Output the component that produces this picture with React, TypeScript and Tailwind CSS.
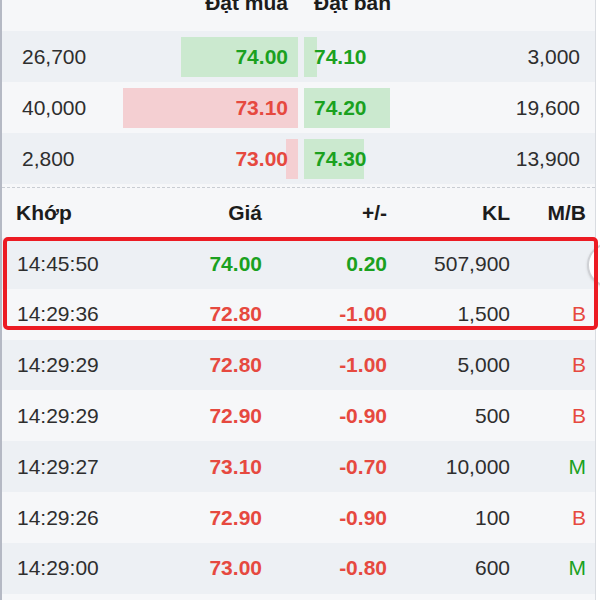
import React from 'react';

type BookRow = {
  bidVol: string;
  bid: string;
  bidUp: boolean;
  bidBar: number;
  ask: string;
  askBar: number;
  askVol: string;
};

type Match = {
  time: string;
  price: string;
  change: string;
  up: boolean;
  vol: string;
  side: '' | 'M' | 'B';
};

const book: BookRow[] = [
  { bidVol: '26,700', bid: '74.00', bidUp: true, bidBar: 117, ask: '74.10', askBar: 13, askVol: '3,000' },
  { bidVol: '40,000', bid: '73.10', bidUp: false, bidBar: 175, ask: '74.20', askBar: 86, askVol: '19,600' },
  { bidVol: '2,800', bid: '73.00', bidUp: false, bidBar: 12, ask: '74.30', askBar: 60, askVol: '13,900' },
];

const matches: Match[] = [
  { time: '14:45:50', price: '74.00', change: '0.20', up: true, vol: '507,900', side: '' },
  { time: '14:29:36', price: '72.80', change: '-1.00', up: false, vol: '1,500', side: 'B' },
  { time: '14:29:29', price: '72.80', change: '-1.00', up: false, vol: '5,000', side: 'B' },
  { time: '14:29:29', price: '72.90', change: '-0.90', up: false, vol: '500', side: 'B' },
  { time: '14:29:27', price: '73.10', change: '-0.70', up: false, vol: '10,000', side: 'M' },
  { time: '14:29:26', price: '72.90', change: '-0.90', up: false, vol: '100', side: 'B' },
  { time: '14:29:00', price: '73.00', change: '-0.80', up: false, vol: '600', side: 'M' },
];

const App: React.FC = () => {
  return (
    <div className="relative w-[600px] h-[600px] overflow-hidden bg-white font-['Liberation_Sans',Arial,sans-serif] text-[21px] text-[#2e2e2e]">
      <div className="flex h-full">
        {/* left edge */}
        <div className="w-[2px] shrink-0 bg-[#b5b9c4]" />

        <div className="w-[594px] shrink-0 bg-[#f6f7f9] border-r border-[#d9dce1] mt-[-20px]">
          {/* Order book header */}
          <div className="flex items-center h-[51px] font-bold text-[#1c1c1c]">
            <div className="w-[120px]" />
            <div className="relative -top-[3px] w-[176px] pr-[10px] text-right">Đặt mua</div>
            <div className="w-[6px]" />
            <div className="relative -top-[3px] w-[176px] pl-[10px]">Đặt bán</div>
          </div>

          {/* Order book rows */}
          {book.map((r, i) => (
            <div
              key={i}
              className={`flex items-center h-[51px] ${i % 2 === 0 ? 'bg-[#edf0f4]' : 'bg-[#f6f7f9]'}`}
            >
              <div className="w-[120px] pl-[20px]">{r.bidVol}</div>
              <div className="relative w-[176px] h-[40px] flex items-center justify-end pr-[10px]">
                <div
                  className={`absolute right-0 top-0 h-full ${r.bidUp ? 'bg-[#cbe9cf]' : 'bg-[#f4cfd2]'}`}
                  style={{ width: r.bidBar }}
                />
                <span className={`relative font-bold ${r.bidUp ? 'text-[#1ba11f]' : 'text-[#e6493f]'}`}>{r.bid}</span>
              </div>
              <div className="w-[6px]" />
              <div className="relative w-[176px] h-[40px] flex items-center pl-[10px]">
                <div className="absolute left-0 top-0 h-full bg-[#cbe9cf]" style={{ width: r.askBar }} />
                <span className="relative font-bold text-[#1ba11f]">{r.ask}</span>
              </div>
              <div className="flex-1 pr-[15px] text-right">{r.askVol}</div>
            </div>
          ))}

          {/* separator */}
          <div className="h-[4px] border-b border-dashed border-[#c9cdd3]" />

          {/* Matches header */}
          <div className="grid grid-cols-[138px_122px_125px_123px_76px] items-center h-[50px] font-bold text-[#1c1c1c]">
            <div className="pl-[14px]">Khớp</div>
            <div className="text-right">Giá</div>
            <div className="text-right">+/-</div>
            <div className="text-right">KL</div>
            <div className="text-right">M/B</div>
          </div>

          {/* Matches rows */}
          {matches.map((m, i) => (
            <div
              key={i}
              className={`grid grid-cols-[138px_122px_125px_123px_76px] items-center h-[50.8px] ${i % 2 === 0 ? 'bg-[#edf0f4]' : 'bg-[#f6f7f9]'}`}
            >
              <div className="pl-[15px]">{m.time}</div>
              <div className={`text-right font-bold ${m.up ? 'text-[#1ba11f]' : 'text-[#e6493f]'}`}>{m.price}</div>
              <div className={`text-right font-bold ${m.up ? 'text-[#1ba11f]' : 'text-[#e6493f]'}`}>{m.change}</div>
              <div className="text-right">{m.vol}</div>
              <div className={`text-right ${m.side === 'M' ? 'text-[#1ba11f]' : 'text-[#e6493f]'}`}>{m.side}</div>
            </div>
          ))}
        </div>
      </div>

      {/* floating round button at the edge */}
      <div className="absolute left-[587px] top-[243px] w-[44px] h-[44px] rounded-full bg-white border-2 border-[#cfd1d5] shadow" />

      {/* highlight box */}
      <div className="absolute left-[3px] top-[237px] w-[595px] h-[93px] border-[4px] border-[#ec1b23] rounded-[5px]" />
    </div>
  );
};

export default App;
